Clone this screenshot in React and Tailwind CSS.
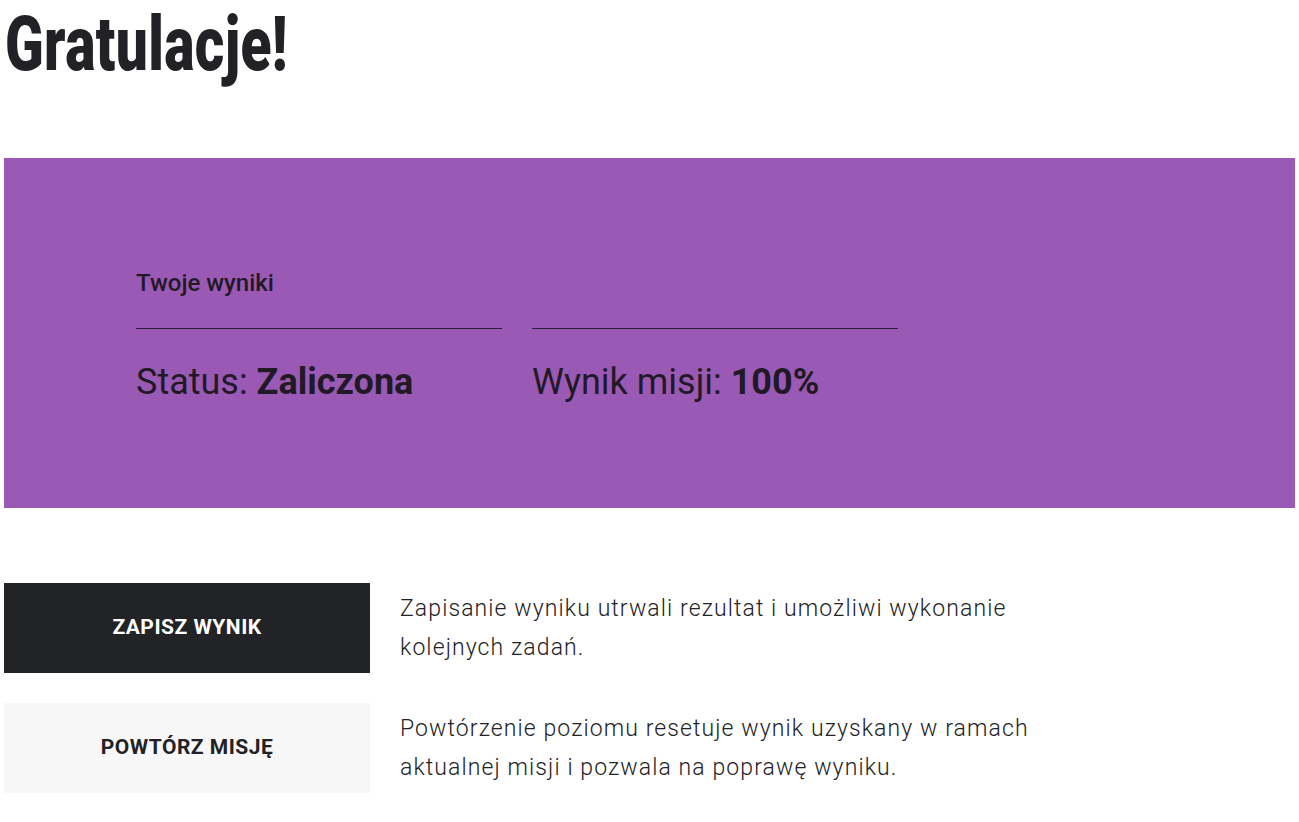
export default function App() {
  return (
    <div className="min-h-[822px] w-[1299px] bg-white text-[#222226] px-[4px]" style={{ fontFamily: "Roboto, 'Liberation Sans', sans-serif" }}>
      <h1 className="pt-[6px] h-[82px] leading-none">
        <span className="inline-block origin-left scale-x-[0.748] text-[76px] font-black ml-[1px] tracking-[0.5px] text-[#222226]">
          Gratulacje!
        </span>
      </h1>
      <div className="mt-[76px] h-[350px] bg-[#9b59b6] pl-[132px] pt-[110px]">
        <div className="text-[24px] leading-[30px] font-medium text-[#1f1a24] mb-[30px]">Twoje wyniki</div>
        <div className="flex gap-[30px]">
          <div className="w-[366px] border-t border-[#2a1f33] pt-[32px] text-[36px] leading-[42px] text-[#1f1a24]">
            Status: <span className="font-bold">Zaliczona</span>
          </div>
          <div className="w-[366px] border-t border-[#2a1f33] pt-[32px] text-[36px] leading-[42px] text-[#1f1a24]">
            Wynik misji: <span className="font-bold">100%</span>
          </div>
        </div>
      </div>
      <div className="mt-[75px] flex flex-col gap-[30px]">
        <div className="flex items-center gap-[30px]">
          <button className="w-[366px] h-[90px] bg-[#222326] text-white text-[21px] font-bold tracking-[0.5px]">ZAPISZ WYNIK</button>
          <p className="w-[660px] text-[23px] leading-[39px] font-light tracking-[1.1px] text-[#222226]">
            Zapisanie wyniku utrwali rezultat i umożliwi wykonanie kolejnych zadań.
          </p>
        </div>
        <div className="flex items-center gap-[30px]">
          <button className="w-[366px] h-[90px] bg-[#f7f7f7] text-[#222226] text-[21px] font-bold tracking-[0.5px]">POWTÓRZ MISJĘ</button>
          <p className="w-[660px] text-[23px] leading-[39px] font-light tracking-[1.1px] text-[#222226]">
            Powtórzenie poziomu resetuje wynik uzyskany w ramach aktualnej misji i pozwala na poprawę wyniku.
          </p>
        </div>
      </div>
    </div>
  );
}
